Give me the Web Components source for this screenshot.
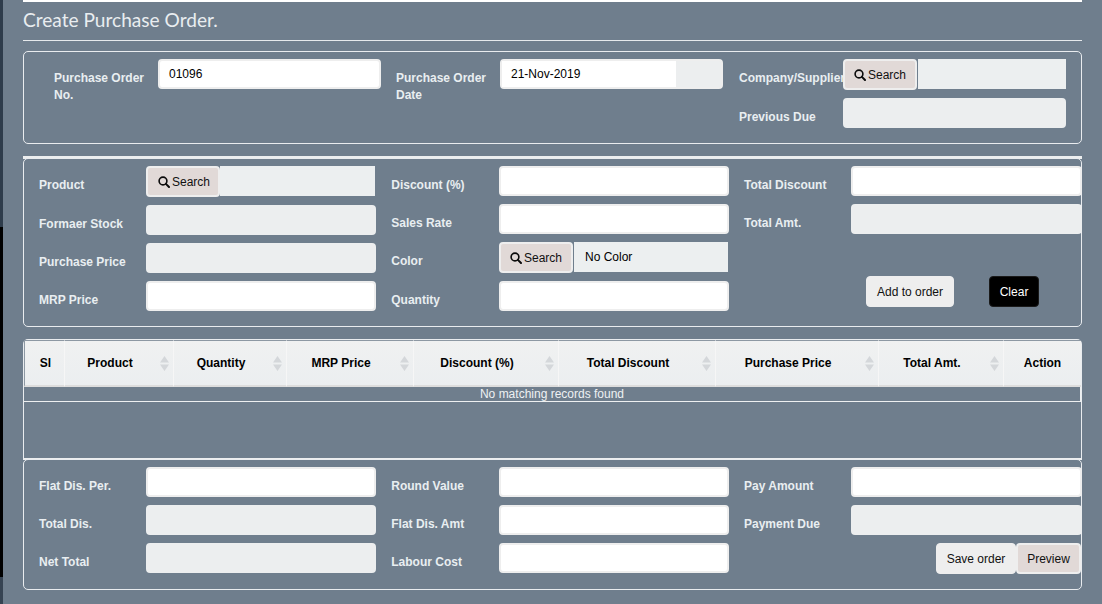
<!DOCTYPE html>
<html lang="en">
<head>
<meta charset="utf-8">
<title>Create Purchase Order</title>
<style>
  html, body { margin: 0; padding: 0; background: #6f7e8d; }
</style>
</head>
<body>
<po-page>
  <po-panel layout="top">
    <po-col>
      <po-field label="Purchase Order No."><po-input value="01096"></po-input></po-field>
    </po-col>
    <po-col>
      <po-field label="Purchase Order Date"><po-date value="21-Nov-2019"></po-date></po-field>
    </po-col>
    <po-col style="margin:0 -1px 0 1px">
      <po-field label="Company/Supplier" nowrap><po-search split flush></po-search></po-field>
      <po-field label="Previous Due"><po-input readonly></po-input></po-field>
    </po-col>
  </po-panel>
  <po-band style="margin:12px 0 -1px"></po-band>
  <po-panel>
    <po-col>
      <po-field label="Product"><po-search></po-search></po-field>
      <po-field label="Formaer Stock"><po-input readonly></po-input></po-field>
      <po-field label="Purchase Price"><po-input readonly></po-input></po-field>
      <po-field label="MRP Price"><po-input></po-input></po-field>
    </po-col>
    <po-col style="--label-w:107.75px">
      <po-field label="Discount (%)"><po-input></po-input></po-field>
      <po-field label="Sales Rate"><po-input></po-input></po-field>
      <po-field label="Color"><po-search split value="No Color"></po-search></po-field>
      <po-field label="Quantity"><po-input></po-input></po-field>
    </po-col>
    <po-col>
      <po-field label="Total Discount"><po-input></po-input></po-field>
      <po-field label="Total Amt."><po-input readonly></po-input></po-field>
      <po-actions style="margin:34px 0 0 122px;gap:35px">
        <po-button>Add to order</po-button>
        <po-button kind="dark" style="width:50px">Clear</po-button>
      </po-actions>
    </po-col>
  </po-panel>
  <po-table style="margin-top:12px"></po-table>
  <po-band style="margin:-1px 0;height:2px"></po-band>
  <po-panel>
    <po-col>
      <po-field label="Flat Dis. Per."><po-input></po-input></po-field>
      <po-field label="Total Dis."><po-input readonly></po-input></po-field>
      <po-field label="Net Total"><po-input readonly></po-input></po-field>
    </po-col>
    <po-col style="--label-w:107.75px">
      <po-field label="Round Value"><po-input></po-input></po-field>
      <po-field label="Flat Dis. Amt"><po-input></po-input></po-field>
      <po-field label="Labour Cost"><po-input></po-input></po-field>
    </po-col>
    <po-col>
      <po-field label="Pay Amount"><po-input></po-input></po-field>
      <po-field label="Payment Due"><po-input readonly></po-input></po-field>
      <po-actions style="justify-content:flex-end;padding-right:1px">
        <po-button style="width:80px">Save order</po-button>
        <po-button kind="tan" style="width:65px">Preview</po-button>
      </po-actions>
    </po-col>
  </po-panel>
</po-page>

<script>
const SEARCH_ICON = `<svg width="12" height="12" viewBox="0 0 12 12" aria-hidden="true">
  <circle cx="5" cy="5" r="3.9" fill="none" stroke="#0b0b0b" stroke-width="1.6"/>
  <path d="M7.9 7.9 L11 11" stroke="#0b0b0b" stroke-width="2" stroke-linecap="round"/>
</svg>`;

class PoPage extends HTMLElement {
  connectedCallback() {
    this.attachShadow({ mode: "open" }).innerHTML = /*html*/ `
      <style>
        :host {
          display: flex;
          width: 1102px;
          height: 604px;
          overflow: hidden;
          background: #6f7e8d;
          font-family: "Liberation Sans", Arial, sans-serif;
          font-size: 12px;
        }
        .strip {
          flex: none;
          width: 3px;
          display: flex;
          flex-direction: column;
        }
        .strip i { display: block; }
        .strip .a { height: 227px; background: #2e3c4b; }
        .strip .b { height: 350px; background: #000; }
        .strip .c { flex: 1; background: #364352; }
        main {
          flex: none;
          width: 1059px;
          margin-left: 20px;
        }
        .topbar { height: 2px; background: #fff; }
        h1 {
          margin: 0;
          height: 38px;
          font: 400 19.1px/36px Lato, sans-serif;
          color: #e9edf0;
        }
        hr {
          margin: 0 0 10px;
          border: 0;
          height: 1px;
          background: #e6e9ec;
        }
      </style>
      <div class="strip"><i class="a"></i><i class="b"></i><i class="c"></i></div>
      <main>
        <div class="topbar"></div>
        <h1>Create Purchase Order.</h1>
        <hr>
        <slot></slot>
      </main>`;
  }
}

class PoPanel extends HTMLElement {
  connectedCallback() {
    this.attachShadow({ mode: "open" }).innerHTML = /*html*/ `
      <style>
        :host {
          display: grid;
          box-sizing: border-box;
          width: 1059px;
          padding: 7px 0 15px 15px;
          border: 1px solid #e9ecef;
          border-radius: 5px;
          grid-template-columns: 337px 337.5px 338px;
          column-gap: 15.25px;
          align-items: start;
          --label-w: 107px;
        }
        :host([layout="top"]) {
          padding-left: 30px;
          grid-template-columns: 327px 327px 327px;
          column-gap: 15px;
          --label-w: 104px;
        }
      </style>
      <slot></slot>`;
  }
}

class PoCol extends HTMLElement {
  connectedCallback() {
    this.attachShadow({ mode: "open" }).innerHTML = `
      <style>
        :host { display: flex; flex-direction: column; gap: 8px; min-width: 0; }
      </style>
      <slot></slot>`;
  }
}

class PoBand extends HTMLElement {
  connectedCallback() {
    this.attachShadow({ mode: "open" }).innerHTML = `
      <style>
        :host { display: block; height: 3px; background: #eceeef; }
      </style>`;
  }
}

class PoField extends HTMLElement {
  connectedCallback() {
    const nowrap = this.hasAttribute("nowrap");
    this.attachShadow({ mode: "open" }).innerHTML = /*html*/ `
      <style>
        :host { display: flex; align-items: flex-start; }
        label {
          flex: none;
          width: var(--label-w);
          box-sizing: border-box;
          padding-top: 11px;
          line-height: 17px;
          font-weight: 700;
          color: #e9eef1;
          white-space: ${nowrap ? "nowrap" : "normal"};
        }
        .control { flex: 1; min-width: 0; }
      </style>
      <label>${this.getAttribute("label")}</label>
      <div class="control"><slot></slot></div>`;
  }
}

class PoInput extends HTMLElement {
  connectedCallback() {
    this.attachShadow({ mode: "open" }).innerHTML = /*html*/ `
      <style>
        :host {
          display: block;
          box-sizing: border-box;
          height: 30px;
          padding: 0 9px;
          border: 2px solid #eeeeee;
          border-radius: 4px;
          background: #fff;
          color: #000;
          line-height: 27px;
        }
        :host([readonly]) { background: #eceeef; border-color: #eceeef; }
      </style>
      ${this.getAttribute("value") || ""}`;
  }
}

class PoDate extends HTMLElement {
  connectedCallback() {
    this.attachShadow({ mode: "open" }).innerHTML = /*html*/ `
      <style>
        :host {
          display: flex;
          box-sizing: border-box;
          height: 30px;
          border: 2px solid #eeeeee;
          border-radius: 4px;
          background: #eceeef;
          color: #000;
          line-height: 27px;
        }
        .value { width: 174px; padding-left: 9px; box-sizing: border-box; background: #fff; }
      </style>
      <div class="value">${this.getAttribute("value") || ""}</div>`;
  }
}

class PoSearch extends HTMLElement {
  connectedCallback() {
    this.attachShadow({ mode: "open" }).innerHTML = /*html*/ `
      <style>
        :host { display: flex; align-items: flex-start; height: 31px; color: #000; }
        button {
          flex: none;
          display: flex;
          align-items: center;
          gap: 2px;
          box-sizing: border-box;
          width: 74px;
          height: 31px;
          margin: 0;
          padding: 0 0 0 10px;
          border: 2px solid #eeeeee;
          border-radius: 4px;
          background: #e1d9d7;
          font: inherit;
          color: #111;
        }
        .value {
          flex: 1;
          height: 30px;
          margin-right: 1px;
          padding-left: 11px;
          background: #eceff0;
          line-height: 30px;
        }
        :host([split]) button { padding-left: 9px; }
        :host([split]) .value { margin-left: 1px; }
        :host([flush]) .value { margin-right: 0; }
      </style>
      <button type="button">${SEARCH_ICON}<span>Search</span></button>
      <div class="value">${this.getAttribute("value") || ""}</div>`;
  }
}

class PoActions extends HTMLElement {
  connectedCallback() {
    this.attachShadow({ mode: "open" }).innerHTML = `
      <style>
        :host { display: flex; }
      </style>
      <slot></slot>`;
  }
}

class PoButton extends HTMLElement {
  connectedCallback() {
    this.attachShadow({ mode: "open" }).innerHTML = /*html*/ `
      <style>
        :host {
          display: flex;
          align-items: center;
          justify-content: center;
          box-sizing: border-box;
          height: 31px;
          padding: 0 10px;
          border: 1px solid #eeeeee;
          border-radius: 4px;
          background: #eeeeee;
          color: #111;
          white-space: nowrap;
        }
        :host([kind="dark"]) { background: #000; border-color: #1a1a1a; color: #fff; padding: 0; }
        :host([kind="tan"]) { background: #e1d9d7; border: 2px solid #eeeeee; padding: 0 8px; }
      </style>
      <slot></slot>`;
  }
}

class PoTable extends HTMLElement {
  connectedCallback() {
    const columns = [
      ["Sl", 41, false],
      ["Product", 109, true],
      ["Quantity", 113, true],
      ["MRP Price", 127, true],
      ["Discount (%)", 145, true],
      ["Total Discount", 157, true],
      ["Purchase Price", 163, true],
      ["Total Amt.", 125, true],
      ["Action", 77, false],
    ];
    const arrows = `<svg class="sort" width="9" height="15" viewBox="0 0 9 15" aria-hidden="true">
      <path d="M4.5 0 L9 6.5 H0z M0 8.5 H9 L4.5 15z" fill="#d4d7da"/></svg>`;
    this.attachShadow({ mode: "open" }).innerHTML = /*html*/ `
      <style>
        :host {
          display: block;
          box-sizing: border-box;
          width: 1059px;
          height: 120px;
          border: 1px solid #e9ecef;
          border-radius: 5px 5px 0 0;
          border-bottom: 0;
        }
        table {
          width: 1057px;
          table-layout: fixed;
          border-collapse: separate;
          border-spacing: 0;
        }
        th {
          position: relative;
          height: 44px;
          padding: 0;
          background: linear-gradient(#f0f1f1, #ebeef0);
          border-top: 1px solid #8d98a3;
          border-bottom: 2px solid #dddddd;
          border-right: 1px solid #f6f6f6;
          font-weight: 700;
          color: #000;
          text-align: center;
        }
        th:first-child { border-left: 1px solid #8d98a3; padding-left: 2px; }
        th:last-child { border-right: 0; }
        th.sorting { padding: 0 29px 0 11px; }
        .sort { position: absolute; right: 4px; top: 15px; }
        td {
          height: 14px;
          padding: 0;
          line-height: 14px;
          text-align: center;
          color: #eef1f3;
          border-bottom: 1px solid #eef0f1;
          border-right: 1px solid #eef0f1;
        }
      </style>
      <table>
        <colgroup>${columns.map((c) => `<col style="width:${c[1]}px">`).join("")}</colgroup>
        <thead>
          <tr>${columns
            .map((c) => `<th class="${c[2] ? "sorting" : ""}">${c[0]}${c[2] ? arrows : ""}</th>`)
            .join("")}</tr>
        </thead>
        <tbody>
          <tr><td colspan="${columns.length}">No matching records found</td></tr>
        </tbody>
      </table>`;
  }
}

customElements.define("po-page", PoPage);
customElements.define("po-panel", PoPanel);
customElements.define("po-col", PoCol);
customElements.define("po-band", PoBand);
customElements.define("po-field", PoField);
customElements.define("po-input", PoInput);
customElements.define("po-date", PoDate);
customElements.define("po-search", PoSearch);
customElements.define("po-actions", PoActions);
customElements.define("po-button", PoButton);
customElements.define("po-table", PoTable);
</script>
</body>
</html>
